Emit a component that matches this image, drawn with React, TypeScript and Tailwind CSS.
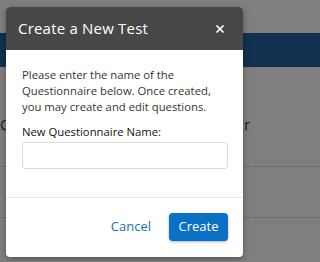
import { X } from 'lucide-react';

const font = { fontFamily: '"Open Sans", "Liberation Sans", sans-serif' };

export default function App() {
  return (
    <div className="relative w-full min-w-[248px] h-[262px] overflow-hidden bg-white" style={font}>
      {/* page behind the modal */}
      <div className="flex flex-col">
        <div className="h-[33px]" />
        <div className="h-[34px] bg-[#24609e]" />
        <div className="h-[52px]" />
        <div className="h-[12px] border-b border-[#dddddd] text-[14px] leading-[12px] text-[#333] flex justify-between w-[250px]">
          <span>C</span>
          <span>r</span>
        </div>
        <div className="h-[36px] border-b border-[#dddddd]" />
        <div className="h-[51px] border-b border-[#dddddd]" />
      </div>

      {/* overlay */}
      <div className="absolute inset-0 bg-black/50" />

      {/* modal */}
      <div className="absolute left-[6px] top-[7px] w-[237px] h-[250px] flex flex-col bg-white rounded-[4px] overflow-hidden shadow-[0_2px_6px_rgba(0,0,0,0.35)]">
        <div className="h-[43px] shrink-0 flex items-center justify-between bg-[#474747] pl-3 pr-[17px]">
          <h2 className="text-[15px] text-white tracking-[0.2px]">Create a New Test</h2>
          <X className="w-[12px] h-[12px] text-white" strokeWidth={3.5} />
        </div>

        <div className="px-4 pt-[17px] pb-[28px] border-b border-[#e6e6e6]">
          <p className="text-[11.3px] leading-[16px] text-[#333333]">
            Please enter the name of the Questionnaire below. Once created, you may create and edit questions.
          </p>
          <label className="block mt-[9px] mb-[2px] text-[11.3px] leading-[16px] font-medium text-[#111111]">
            New Questionnaire Name:
          </label>
          <input
            type="text"
            className="block w-[206px] h-[27px] rounded-[3px] border border-[#dcdcdc] bg-white px-2 text-[12px] outline-none"
          />
        </div>

        <div className="flex flex-1 items-start justify-end gap-[18px] pt-[15px] pr-[15px]">
          <button type="button" className="h-[28px] text-[13px] text-[#1170c2]">
            Cancel
          </button>
          <button
            type="button"
            className="h-[28px] w-[59px] rounded-[4px] bg-[#0b6fc4] text-[13px] text-white shadow-[0_1px_3px_rgba(0,0,0,0.3)]"
          >
            Create
          </button>
        </div>
      </div>
    </div>
  );
}
